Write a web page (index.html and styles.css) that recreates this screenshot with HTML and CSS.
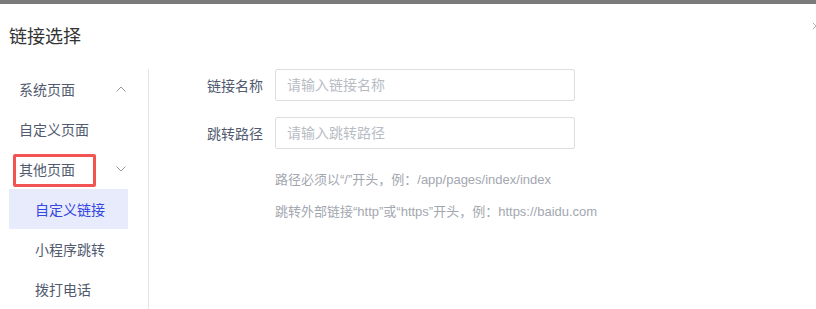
FILE: index.html
```html
<!DOCTYPE html>
<html>
<head>
    <meta charset="utf-8">
    <link rel="stylesheet" href="styles.css">
</head>
<body>
    <div class="top-bar"></div>

    <div class="modal">
        <div class="modal-header">
            <h2>链接选择</h2>
            <svg class="close" viewBox="0 0 10 10"><path d="M1 1 L9 9 M9 1 L1 9"/></svg>
        </div>

        <div class="modal-body">
            <ul class="menu">
                <li class="menu-item">
                    <span>系统页面</span>
                    <svg class="chevron" viewBox="0 0 10 6"><polyline points="0.5,5.5 5,1 9.5,5.5"/></svg>
                </li>
                <li class="menu-item"><span>自定义页面</span></li>
                <li class="menu-item marked">
                    <span>其他页面</span>
                    <svg class="chevron" viewBox="0 0 10 6"><polyline points="0.5,0.5 5,5 9.5,0.5"/></svg>
                    <div class="mark-box"></div>
                </li>
                <li class="menu-item sub active"><span>自定义链接</span></li>
                <li class="menu-item sub"><span>小程序跳转</span></li>
                <li class="menu-item sub"><span>拨打电话</span></li>
            </ul>

            <div class="form">
                <div class="form-row">
                    <label for="link-name">链接名称</label>
                    <input type="text" id="link-name" placeholder="请输入链接名称">
                </div>
                <div class="form-row">
                    <label for="link-path">跳转路径</label>
                    <input type="text" id="link-path" placeholder="请输入跳转路径">
                </div>
                <div class="hints">
                    <p>路径必须以“/”开头，例：/app/pages/index/index</p>
                    <p>跳转外部链接“http”或“https”开头，例：https://baidu.com</p>
                </div>
            </div>
        </div>
    </div>
</body>
</html>
```

FILE: styles.css
```css
body {
    margin: 0;
    font-family: 'Liberation Sans', 'Noto Sans CJK SC', sans-serif;
    color: #515a6e;
    background-color: #fff;
    height: 309px;
    overflow: hidden;
}
.top-bar {
    height: 4px;
    background-color: #7a7a7a;
}
.modal {
    display: flex;
    flex-direction: column;
    height: 305px;
}
.modal-header {
    position: relative;
    padding: 21px 9px 20px;
}
h2 {
    margin: 0;
    font-size: 18px;
    line-height: 24px;
    font-weight: 400;
    color: #333;
}
.close {
    position: absolute;
    top: 18px;
    right: -4px;
    width: 8px;
    height: 8px;
    fill: none;
    stroke: #aaa;
    stroke-width: 1.2;
}
.modal-body {
    flex-grow: 1;
    display: flex;
}
.menu {
    list-style: none;
    margin: 0 0 0 9px;
    padding: 0;
    width: 119px;
}
.menu-item {
    position: relative;
    display: flex;
    align-items: center;
    justify-content: space-between;
    height: 40px;
    padding: 0 2px 0 10px;
    font-size: 14px;
}
.menu-item.sub {
    padding-left: 26px;
}
.menu-item.active {
    background-color: #e8ebfc;
    color: #3346e0;
}
.chevron {
    width: 10px;
    height: 6px;
    fill: none;
    stroke: #999;
    stroke-width: 1;
}
.mark-box {
    position: absolute;
    left: 4px;
    top: 5px;
    width: 83px;
    height: 33px;
    box-sizing: border-box;
    border: 3px solid #f25353;
    border-radius: 2px;
}
.form {
    flex-grow: 1;
    margin-left: 20px;
    border-left: 1px solid #e6e6e6;
    padding-left: 14px;
}
.form-row {
    display: flex;
    align-items: center;
    gap: 12px;
    margin-bottom: 16px;
}
label {
    width: 100px;
    text-align: right;
    font-size: 14px;
    color: #515a6e;
}
input[type="text"] {
    width: 300px;
    height: 32px;
    box-sizing: border-box;
    padding: 0 11px;
    border: 1px solid #dcdee2;
    border-radius: 2px;
    font-family: inherit;
    font-size: 14px;
    outline: none;
}
input[type="text"]::placeholder {
    color: #b8bcc4;
}
.hints {
    margin-left: 112px;
    margin-top: -1px;
}
.hints p {
    margin: 0;
    font-size: 13px;
    line-height: 32px;
    color: #a3a7b0;
}
```
